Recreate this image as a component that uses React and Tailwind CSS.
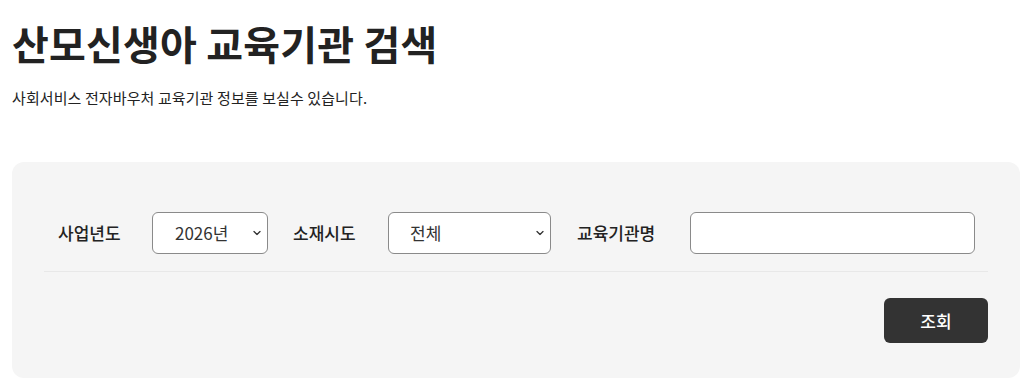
import React from "react";

const font = { fontFamily: '"Noto Sans CJK KR", "Noto Sans", sans-serif' };

function Chevron() {
  return (
    <svg width="8" height="5" viewBox="0 0 8 5" className="pointer-events-none absolute right-[7px] top-1/2 -translate-y-1/2">
      <path d="M1 1 L4 4 L7 1" fill="none" stroke="#333" strokeWidth="1.3" strokeLinecap="round" strokeLinejoin="round" />
    </svg>
  );
}

export default function App() {
  return (
    <div className="bg-white w-[1024px] h-[389px] overflow-hidden text-[#222]" style={font}>
      <div className="px-[12px] pt-[16px]">
        <h1 className="text-[40px] font-bold leading-[54px] tracking-[0.2px] text-[#222]">산모신생아 교육기관 검색</h1>
        <p className="mt-[18px] text-[15px] leading-[20px] tracking-[0.1px] text-[#222]">사회서비스 전자바우처 교육기관 정보를 보실수 있습니다.</p>
        <div className="mt-[54px] w-[1008px] h-[216px] rounded-[12px] bg-[#f5f5f5] px-[32px] pt-[50px]">
          <div className="flex items-center h-[42px] pl-[14px]">
            <span className="text-[17px] font-medium w-[94px]">사업년도</span>
            <div className="relative w-[116px] h-[42px]">
              <select className="appearance-none w-full h-full rounded-[6px] border border-[#8a8a8a] bg-white pl-[22px] text-[17px] text-[#333] outline-none" style={font} defaultValue="2026">
                <option value="2026">2026년</option>
              </select>
              <Chevron />
            </div>
            <span className="text-[17px] font-medium ml-[25px] w-[95px]">소재시도</span>
            <div className="relative w-[163px] h-[42px]">
              <select className="appearance-none w-full h-full rounded-[6px] border border-[#8a8a8a] bg-white pl-[21px] text-[17px] text-[#333] outline-none" style={font} defaultValue="all">
                <option value="all">전체</option>
              </select>
              <Chevron />
            </div>
            <span className="text-[17px] font-medium ml-[26px] w-[113px]">교육기관명</span>
            <input className="w-[285px] h-[42px] rounded-[6px] border border-[#8a8a8a] bg-white outline-none" />
          </div>
          <div className="mt-[17px] h-px w-[944px] bg-[#e8e8e8]" />
          <div className="flex justify-end w-[944px] mt-[26px]">
            <button className="w-[104px] h-[45px] rounded-[6px] bg-[#333333] text-white text-[17px] font-medium" style={font}>조회</button>
          </div>
        </div>
      </div>
    </div>
  );
}
